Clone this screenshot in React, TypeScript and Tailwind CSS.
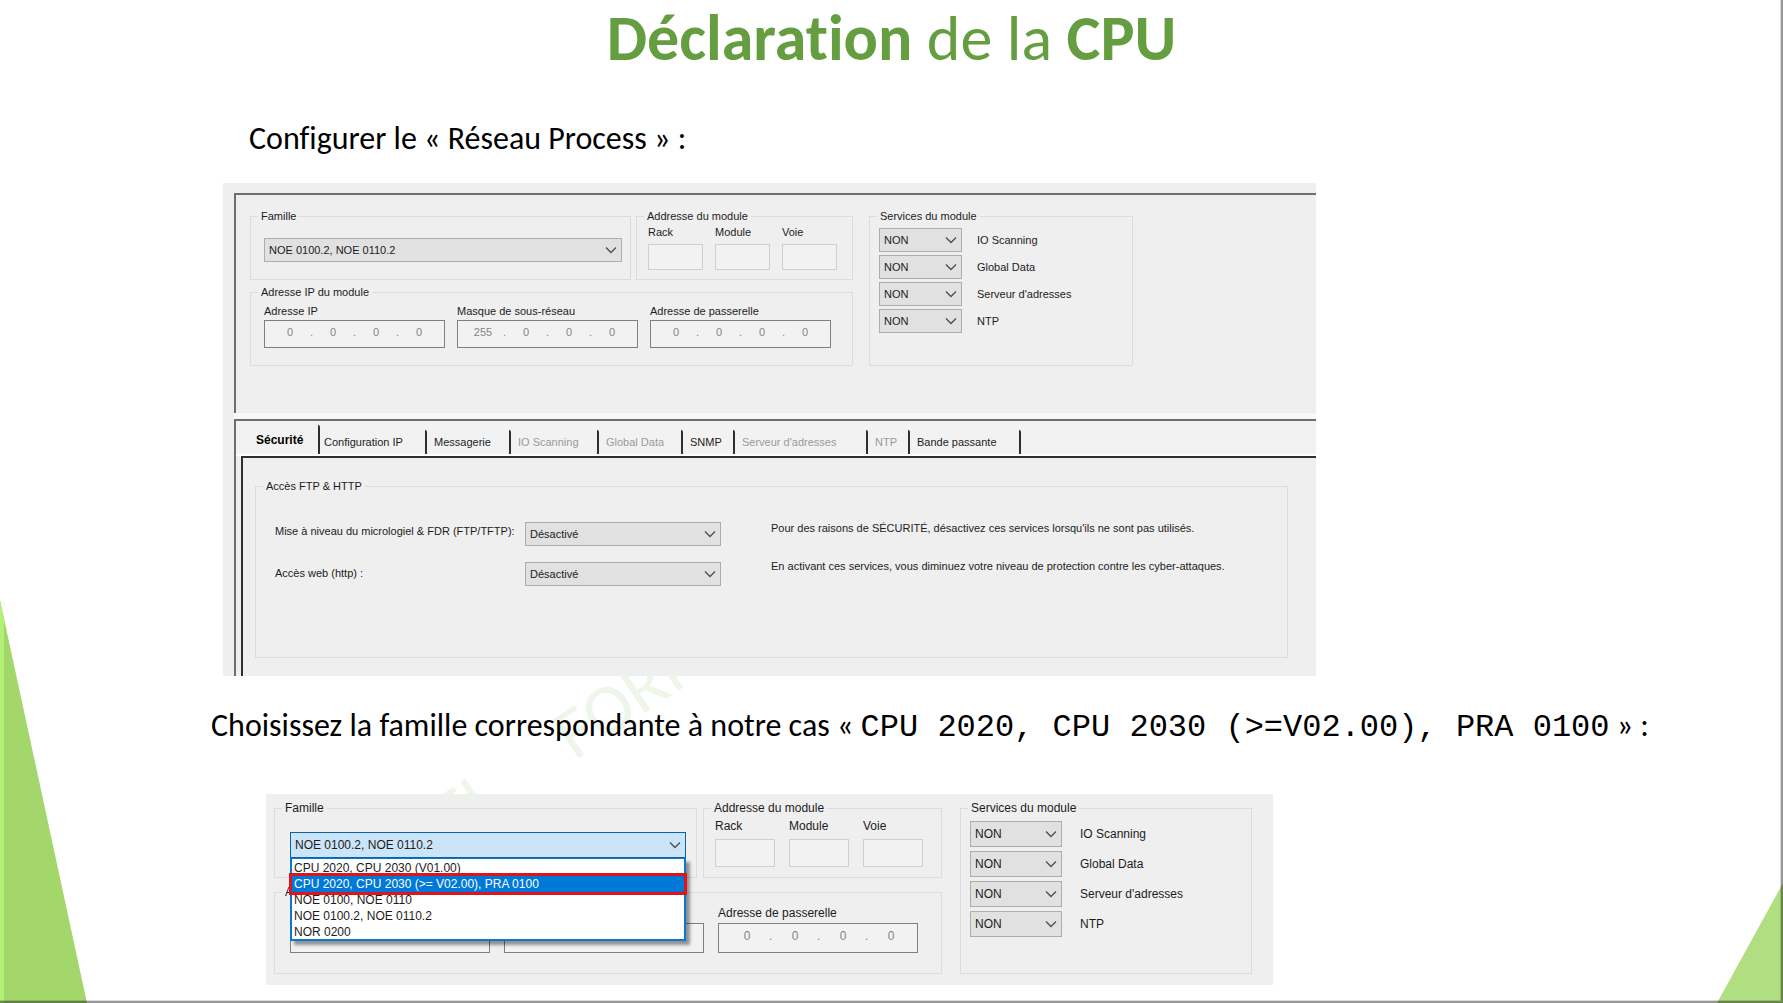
import { clsx } from "clsx";
import type { ReactNode } from "react";

type Size = "sm" | "lg";

const FAMILIES = [
  "CPU 2020, CPU 2030 (V01.00)",
  "CPU 2020, CPU 2030 (>= V02.00), PRA 0100",
  "NOE 0100, NOE 0110",
  "NOE 0100.2, NOE 0110.2",
  "NOR 0200",
];

const SERVICES = ["IO Scanning", "Global Data", "Serveur d'adresses", "NTP"];

const TABS = [
  { label: "Configuration IP", width: "w-[107px] pl-1" },
  { label: "Messagerie", width: "w-[84px] pl-[7px]" },
  { label: "IO Scanning", width: "w-[88px] pl-[7px]", disabled: true },
  { label: "Global Data", width: "w-[84px] pl-[7px]", disabled: true },
  { label: "SNMP", width: "w-[52px] pl-[7px]" },
  { label: "Serveur d'adresses", width: "w-[133px] pl-[7px]", disabled: true },
  { label: "NTP", width: "w-[42px] pl-[7px]", disabled: true },
  { label: "Bande passante", width: "w-[111px] pl-[7px]" },
];

function GroupBox({ title, className, children }: { title: string; className?: string; children?: ReactNode }) {
  return (
    <fieldset className={clsx("min-w-0 border border-[#dcdcdc]", className)}>
      <legend className="ml-[7px] px-[3px] leading-[14px]">{title}</legend>
      {children}
    </fieldset>
  );
}

function Select({
  id,
  label,
  options,
  value,
  open,
  className,
}: {
  id: string;
  label?: string;
  options: string[];
  value: string;
  open?: boolean;
  className?: string;
}) {
  return (
    <div className={clsx("relative shrink-0", className)}>
      <select
        id={id}
        aria-label={label}
        defaultValue={value}
        className={clsx(
          "block h-full w-full appearance-none border pl-1 pr-6 outline-none",
          open ? "border-[#0a64ad] bg-[#cce4f7]" : "border-[#adadad] bg-[#e1e1e1]"
        )}
      >
        {options.map((o) => (
          <option key={o}>{o}</option>
        ))}
      </select>
      <svg
        viewBox="0 0 12 8"
        className="pointer-events-none absolute right-[5px] top-1/2 h-2 w-3 -translate-y-1/2"
        fill="none"
        stroke="#505050"
        strokeWidth="1.4"
      >
        <path d="M1 1.5 L6 6.5 L11 1.5" />
      </svg>
    </div>
  );
}

function IpField({ id, label, value, size }: { id: string; label: string; value: string[]; size: Size }) {
  const lg = size === "lg";
  return (
    <div className={lg ? "w-[200px]" : "w-[181px]"}>
      <label htmlFor={`${id}-0`} className="block leading-[14px]">
        {label}
      </label>
      <div
        className={clsx(
          "flex items-start border border-[#7f7f7f] bg-[#f2f2f2] text-[#858585]",
          lg ? "mt-[3px] h-[30px] pl-[6px] pt-[5px]" : "mt-[2px] h-7 pl-[5px] pt-1"
        )}
      >
        {value.map((v, i) => (
          <div key={i} className="flex leading-[14px]">
            {i > 0 && <span className={lg ? "w-1" : "w-[3px]"}>.</span>}
            <input
              id={`${id}-${i}`}
              aria-label={`${label} ${i + 1}`}
              defaultValue={v}
              className={clsx("h-[14px] bg-transparent text-center outline-none", lg ? "w-11" : "w-10")}
            />
          </div>
        ))}
      </div>
    </div>
  );
}

function SlotField({ id, label, size }: { id: string; label: string; size: Size }) {
  const lg = size === "lg";
  return (
    <div className={lg ? "w-[60px]" : "w-[55px]"}>
      <label htmlFor={id} className="block leading-[14px]">
        {label}
      </label>
      <input
        id={id}
        className={clsx(
          "block w-full border border-[#cfcfcf] bg-[#f2f2f2] outline-none",
          lg ? "mt-[6px] h-7" : "mt-[5px] h-[26px]"
        )}
      />
    </div>
  );
}

function FamilyList() {
  return (
    <ul
      role="listbox"
      aria-label="Famille"
      className="absolute left-0 top-full z-10 h-[83px] w-full border-2 border-t border-[#0a78d0] bg-white pt-px shadow-[4px_4px_3px_rgba(0,0,0,0.4)]"
    >
      {FAMILIES.map((f, i) => (
        <li
          key={f}
          role="option"
          aria-selected={i === 1}
          className={clsx(
            "h-4 pl-[2px] leading-4",
            i === 1 && "bg-[#0078d7] text-white outline-3 outline-[#e0141c]"
          )}
        >
          {f}
        </li>
      ))}
    </ul>
  );
}

function ModuleForm({ id, size, open }: { id: string; size: Size; open?: boolean }) {
  const lg = size === "lg";
  return (
    <div className={clsx("flex", lg ? "gap-[18px] text-xs" : "gap-4 text-[11px]")}>
      <div className={lg ? "w-[668px]" : "w-[603px]"}>
        <div className={clsx("flex", lg ? "gap-[6px]" : "gap-[5px]")}>
          <GroupBox title="Famille" className={lg ? "h-[77px] w-[423px]" : "h-[71px] w-[381px]"}>
            <div className={clsx("relative", lg ? "ml-[15px] mt-[17px] w-[396px]" : "ml-[13px] mt-[15px] w-[358px]")}>
              <Select
                id={`${id}-famille`}
                label="Famille"
                options={FAMILIES}
                value="NOE 0100.2, NOE 0110.2"
                open={open}
                className={lg ? "h-[26px]" : "h-6"}
              />
              {open && <FamilyList />}
            </div>
          </GroupBox>
          <GroupBox title="Addresse du module" className={lg ? "h-[77px] w-[239px]" : "h-[71px] w-[217px]"}>
            <div className={clsx("flex", lg ? "gap-[14px] pl-[11px] pt-1" : "gap-3 pl-[11px] pt-[2px]")}>
              <SlotField id={`${id}-rack`} label="Rack" size={size} />
              <SlotField id={`${id}-module`} label="Module" size={size} />
              <SlotField id={`${id}-voie`} label="Voie" size={size} />
            </div>
          </GroupBox>
        </div>
        <GroupBox title="Adresse IP du module" className={lg ? "mt-[7px] h-[89px]" : "mt-[5px] h-[81px]"}>
          <div className={clsx("flex", lg ? "gap-[14px] pl-[15px] pt-[7px]" : "gap-3 pl-[13px] pt-[5px]")}>
            <IpField id={`${id}-ip`} label="Adresse IP" value={["0", "0", "0", "0"]} size={size} />
            <IpField id={`${id}-mask`} label="Masque de sous-réseau" value={["255", "0", "0", "0"]} size={size} />
            <IpField id={`${id}-gw`} label="Adresse de passerelle" value={["0", "0", "0", "0"]} size={size} />
          </div>
        </GroupBox>
      </div>

      <GroupBox title="Services du module" className={lg ? "h-[173px] w-[292px]" : "h-[157px] w-[264px]"}>
        <div className={clsx("flex flex-col", lg ? "gap-1 pl-[9px] pt-[6px]" : "gap-[3px] pl-[9px] pt-[5px]")}>
          {SERVICES.map((s, i) => (
            <div key={s} className={clsx("flex items-center", lg ? "gap-[18px]" : "gap-[15px]")}>
              <Select
                id={`${id}-service-${i}`}
                options={["NON", "OUI"]}
                value="NON"
                className={lg ? "h-[26px] w-[92px]" : "h-6 w-[83px]"}
              />
              <label htmlFor={`${id}-service-${i}`}>{s}</label>
            </div>
          ))}
        </div>
      </GroupBox>
    </div>
  );
}

function SecurityTab() {
  return (
    <div className="ml-[5px] h-[220px] border-l-2 border-t-2 border-[#2e2e2e] bg-[#efefef] pl-3 pr-7 pt-[21px]">
      <GroupBox title="Accès FTP & HTTP" className="h-[179px]">
        <div className="flex pl-[19px] pt-7">
          <div className="flex w-[250px] flex-col gap-7 whitespace-nowrap pt-[3px] leading-[14px]">
            <label htmlFor="ftp">Mise à niveau du micrologiel &amp; FDR (FTP/TFTP):</label>
            <label htmlFor="http">Accès web (http) :</label>
          </div>
          <div className="flex flex-col gap-4 pt-px">
            <Select id="ftp" options={["Désactivé", "Activé"]} value="Désactivé" className="h-6 w-[196px]" />
            <Select id="http" options={["Désactivé", "Activé"]} value="Désactivé" className="h-6 w-[196px]" />
          </div>
          <div className="flex flex-col gap-6 pl-[50px] leading-[14px]">
            <p>Pour des raisons de SÉCURITÉ, désactivez ces services lorsqu'ils ne sont pas utilisés.</p>
            <p>En activant ces services, vous diminuez votre niveau de protection contre les cyber-attaques.</p>
          </div>
        </div>
      </GroupBox>
    </div>
  );
}

export default function App() {
  return (
    <div className="relative isolate min-h-screen overflow-hidden bg-white font-['Carlito','Calibri','Lato',sans-serif] text-black [font-variant-ligatures:none]">
      {/* Corner decorations */}
      <svg
        className="absolute bottom-0 left-0 -z-10 h-[403px] w-[87px]"
        viewBox="0 0 87 403"
        preserveAspectRatio="none"
      >
        <path d="M0 0 L87 403 H0 Z" fill="#a3d76b" />
        <path d="M0 0 L4 19 V403 H0 Z" fill="#b3f174" />
      </svg>
      <svg
        className="absolute bottom-0 right-0 -z-10 h-[120px] w-[66px]"
        viewBox="0 0 66 120"
        preserveAspectRatio="none"
      >
        <path d="M66 0 V120 H0 Z" fill="#b0de80" />
      </svg>

      {/* Slide bevel */}
      <div className="pointer-events-none absolute inset-0 border-b-2 border-r-2 border-black/40 shadow-[inset_-1px_-1px_0_rgba(0,0,0,0.15)]" />

      {/* Watermark */}
      <div
        aria-hidden="true"
        className="absolute left-[459px] top-[780px] -z-10 origin-bottom-left -rotate-[34deg] whitespace-pre text-[72px] leading-none text-[#eef6e9]"
      >
        EL     FORM
      </div>

      <h1 className="pt-1 text-center text-[64px] leading-[68px] text-[#659e40]">
        <b>Déclaration</b> de la <b>CPU</b>
      </h1>

      <p className="mt-[47px] pl-[249px] text-[32px] leading-10">Configurer le « Réseau Process » :</p>

      <section className="ml-[223px] mt-6 w-[1093px] bg-[#efefef] pl-[11px] pt-[10px] font-['Liberation_Sans',Arial,sans-serif] text-[11px] leading-[14px] text-[#1c1c1c]">
        <div className="h-[220px] border-l-2 border-t-2 border-[#6e6e6e] pl-[14px] pt-[14px]">
          <ModuleForm id="noe" size="sm" />
        </div>
        <div className="h-[6px] bg-[#f8f8f8]" />
        <div className="border-l-2 border-t-2 border-[#6e6e6e]">
          <div role="tablist" className="flex h-[35px] items-end border-b-2 border-white bg-[#f2f2f2] pl-3">
            <button
              role="tab"
              aria-selected="true"
              className="h-[29px] w-[72px] rounded-tr-[2px] border-r-2 border-[#2e2e2e] pl-2 text-left text-xs font-bold text-black"
            >
              Sécurité
            </button>
            {TABS.map((t) => (
              <button
                key={t.label}
                role="tab"
                aria-selected="false"
                disabled={t.disabled}
                className={clsx(
                  "h-6 whitespace-nowrap rounded-tr-[2px] border-r-2 border-[#2e2e2e] text-left",
                  t.width,
                  t.disabled && "text-[#9a9a9a]"
                )}
              >
                {t.label}
              </button>
            ))}
          </div>
          <SecurityTab />
        </div>
      </section>

      <p className="mt-[30px] whitespace-nowrap pl-[211px] text-[32px] leading-10">
        Choisissez la famille correspondante à notre cas «{" "}
        <span className="font-['Liberation_Mono','Courier_New',monospace]">
          CPU 2020, CPU 2030 (&gt;=V02.00), PRA 0100
        </span>{" "}
        » :
      </p>

      <section className="mb-[17px] ml-[266px] mt-[46px] w-[1007px] bg-[#efefef] pb-[11px] pl-2 pt-[7px] font-['Liberation_Sans',Arial,sans-serif] text-[#1c1c1c]">
        <ModuleForm id="cpu" size="lg" open />
      </section>
    </div>
  );
}
